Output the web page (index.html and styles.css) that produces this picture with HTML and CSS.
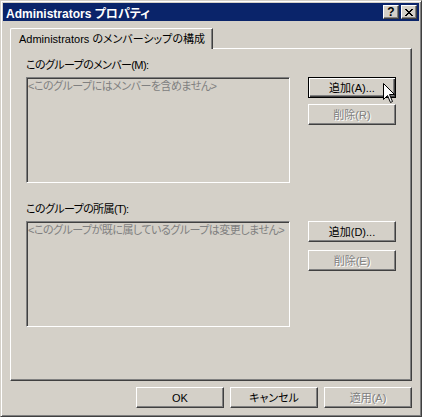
FILE: index.html
```html
<!DOCTYPE html>
<html>
<head>
  <meta charset="UTF-8" />
  <title>Administrators プロパティ</title>
  <link rel="stylesheet" href="styles.css">
</head>
<body>
  <div class="window">
    <div class="titlebar">
      <span class="title">Administrators プロパティ</span>
      <div class="caption-buttons">
        <button class="cap-btn">?</button>
        <button class="cap-btn">
          <svg width="8" height="7" viewBox="0 0 8 7"><path d="M0 0h2v1h1v1h2V1h1V0h2v1H7v1H6v1H5v1h1v1h1v1h1v1H6V6H5V5H3v1H2v1H0V6h1V5h1V4h1V3H2V2H1V1H0z" fill="#000"/></svg>
        </button>
      </div>
    </div>

    <div class="dialog-body">
      <div class="tabs">
        <div class="tab active">Administrators のメンバーシップの構成</div>
      </div>

      <div class="panel">
        <div class="group">
          <div class="label">このグループのメンバー(M):</div>
          <div class="row">
            <div class="listbox">&lt;このグループにはメンバーを含めません&gt;</div>
            <div class="side-buttons">
              <div class="btn-wrap">
                <button class="btn default">追加(A)...</button>
                <!-- mouse pointer hovering over the add button -->
                <svg class="cursor" width="12" height="20" viewBox="0 0 12 20">
                  <path d="M0.5 0.5V16.5L4.5 12.5L7.5 19.5L9.5 18.5L6.5 11.5H11.5Z" fill="#fff" stroke="#000" stroke-width="1"/>
                </svg>
              </div>
              <button class="btn" disabled>削除(R)</button>
            </div>
          </div>
        </div>

        <div class="group second">
          <div class="label">このグループの所属(T):</div>
          <div class="row">
            <div class="listbox">&lt;このグループが既に属しているグループは変更しません&gt;</div>
            <div class="side-buttons wide-gap">
              <button class="btn">追加(D)...</button>
              <button class="btn" disabled>削除(E)</button>
            </div>
          </div>
        </div>
      </div>

      <div class="footer">
        <button class="btn">OK</button>
        <button class="btn">キャンセル</button>
        <button class="btn" disabled>適用(A)</button>
      </div>
    </div>
  </div>
</body>
</html>
```

FILE: styles.css
```css
body {
  margin: 0;
  background: #d4d0c8;
  font-family: "Liberation Sans", "Noto Sans CJK JP", sans-serif;
  font-size: 11px;
  font-feature-settings: "palt";
  color: #000;
}
.window {
  width: 422px;
  height: 417px;
  box-sizing: border-box;
  border: 1px solid;
  border-color: #d4d0c8 #404040 #404040 #d4d0c8;
  box-shadow: inset 1px 1px #fff, inset -1px -1px #808080;
  padding: 2px;
  display: flex;
  flex-direction: column;
}
.titlebar {
  height: 18px;
  background: #0a246a;
  color: #fff;
  display: flex;
  align-items: center;
  justify-content: space-between;
  padding: 0 2px 0 3px;
}
.title {
  font-weight: bold;
  font-size: 12px;
}
.caption-buttons {
  display: flex;
  gap: 2px;
}
.cap-btn {
  width: 16px;
  height: 14px;
  padding: 0;
  box-sizing: border-box;
  border: 1px solid;
  border-color: #fff #404040 #404040 #fff;
  box-shadow: inset -1px -1px #808080;
  background: #d4d0c8;
  font-family: "Liberation Sans", sans-serif;
  font-weight: bold;
  font-size: 12px;
  line-height: 11px;
  color: #000;
  display: flex;
  align-items: center;
  justify-content: center;
}
.dialog-body {
  flex: 1;
  padding: 7px 7px 0;
  display: flex;
  flex-direction: column;
}
.tabs {
  display: flex;
  height: 20px;
}
.tab {
  position: relative;
  z-index: 1;
  width: 203px;
  height: 21px;
  box-sizing: border-box;
  border: 1px solid;
  border-bottom: none;
  border-color: #fff #404040 #fff #fff;
  border-top-left-radius: 2px;
  box-shadow: inset -1px 0 #808080;
  background: #d4d0c8;
  padding: 3px 0 0 8px;
  line-height: 14px;
  white-space: nowrap;
}
.panel {
  height: 333px;
  box-sizing: border-box;
  border: 1px solid;
  border-color: #fff #404040 #404040 #fff;
  box-shadow: inset -1px -1px #808080;
  padding: 9px 13px 0 15px;
}
.label {
  height: 14px;
  line-height: 14px;
  margin-bottom: 5px;
  white-space: nowrap;
  letter-spacing: -0.6px;
}
.second {
  margin-top: 19px;
}
.row {
  display: flex;
  gap: 18px;
  align-items: flex-start;
}
.listbox {
  width: 264px;
  height: 106px;
  box-sizing: border-box;
  border: 1px solid;
  border-color: #808080 #fff #fff #808080;
  box-shadow: inset 1px 1px #404040, inset -1px -1px #d4d0c8;
  padding: 1px 0 0 1px;
  line-height: 14px;
  color: #808080;
  white-space: nowrap;
  overflow: hidden;
  letter-spacing: -0.5px;
}
.side-buttons {
  display: flex;
  flex-direction: column;
  gap: 6px;
}
.side-buttons.wide-gap {
  gap: 8px;
}
.btn-wrap {
  position: relative;
}
.btn {
  width: 88px;
  height: 21px;
  box-sizing: border-box;
  padding: 0;
  border: 1px solid;
  border-color: #fff #404040 #404040 #fff;
  box-shadow: inset -1px -1px #808080;
  background: #d4d0c8;
  font: inherit;
  color: #000;
  line-height: 14px;
}
.btn.default {
  border-color: #000;
  box-shadow: inset 1px 1px #fff, inset -1px -1px #404040, inset -2px -2px #808080;
}
.btn:disabled {
  color: #808080;
  text-shadow: 1px 1px #fff;
}
.cursor {
  position: absolute;
  left: 75px;
  top: 6px;
}
.footer {
  display: flex;
  justify-content: flex-end;
  gap: 6px;
  margin-top: 6px;
}
```
